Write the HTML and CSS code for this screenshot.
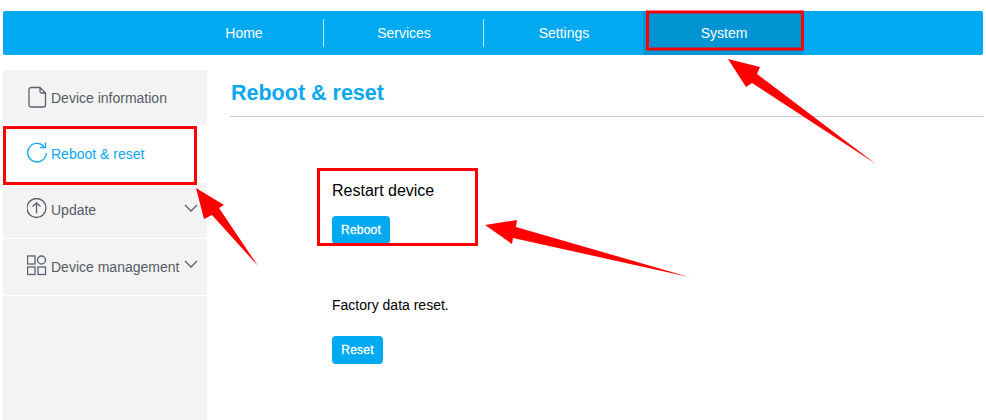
FILE: index.html
```html
<!DOCTYPE html>
<html lang="en">
<head>
<meta charset="utf-8">
<title>Reboot &amp; reset</title>
<link rel="stylesheet" href="styles.css">
</head>
<body>
<nav class="topnav">
  <a class="tab sep">Home</a>
  <a class="tab sep">Services</a>
  <a class="tab">Settings</a>
  <a class="tab active">System</a>
</nav>
<div class="layout">
  <aside class="sidebar">
    <div class="item">
      <svg class="icon" viewBox="0 0 20 22"><path d="M4 1.500h9l5.500 5.500v12a2 2 0 0 1-2 2H4a2 2 0 0 1-2-2v-15.500a2 2 0 0 1 2-2z M13 1.500v4a1.500 1.500 0 0 0 1.500 1.500h4"/></svg>
      <span>Device information</span>
    </div>
    <div class="item current">
      <svg class="icon" viewBox="0 0 20 22"><path d="M17 4.500A9.300 9.300 0 1 0 19.300 11 M18.500 0.500v5h-5.500"/></svg>
      <span>Reboot &amp; reset</span>
    </div>
    <div class="item raised">
      <svg class="icon" viewBox="0 0 20 22"><circle cx="9.500" cy="10" r="9.500"/><path d="M9.500 15.500V5 M5.500 8.500L9.500 4.800l4 3.700"/></svg>
      <span>Update</span>
      <svg class="chev" viewBox="0 0 14 8"><path d="M1 1l6 6 6-6"/></svg>
    </div>
    <div class="item">
      <svg class="icon" viewBox="0 0 20 22"><rect x="0.500" y="1" width="7.500" height="8"/><circle cx="14.500" cy="5" r="4"/><rect x="0.500" y="12" width="7.500" height="7.500"/><rect x="11" y="12" width="7.500" height="7.500"/></svg>
      <span>Device management</span>
      <svg class="chev" viewBox="0 0 14 8"><path d="M1 1l6 6 6-6"/></svg>
    </div>
  </aside>
  <main class="content">
    <h1 class="title">Reboot &amp; reset</h1>
    <section class="panel">
      <h2 class="restart">Restart device</h2>
      <button class="btn">Reboot</button>
      <p class="factory">Factory data reset.</p>
      <button class="btn">Reset</button>
    </section>
  </main>
</div>
<svg class="annotations" viewBox="0 0 986 420">
  <g class="boxes">
    <rect x="647.500" y="12" width="155" height="37"/>
    <rect x="4.500" y="127.500" width="191" height="56"/>
    <rect x="318.500" y="169.500" width="158" height="75"/>
  </g>
  <polygon points="728,59 760,67 757,74 876,164 752,83 746,87"/>
  <polygon points="196,188 224,205 219,208 258,266 212,215 204,219"/>
  <polygon points="485,225 517,220 516,227 689,277 513,238 512,244"/>
</svg>
</body>
</html>
```
FILE: styles.css
```css
* { box-sizing: border-box; }
html, body { height: 420px; overflow: hidden; }
body {
  margin: 0;
  padding: 11px 3px 0;
  background: #fff;
  font-family: "Liberation Sans", Arial, sans-serif;
  color: #000;
  position: relative;
}
.topnav {
  display: flex;
  height: 44px;
  padding-left: 160px;
  background: #00a9f0;
  border-radius: 2px;
}
.tab {
  width: 160px;
  padding-left: 2px;
  display: flex;
  align-items: center;
  justify-content: center;
  color: #fff;
  font-size: 14px;
  position: relative;
}
.tab.sep::after {
  content: "";
  position: absolute;
  right: -1px;
  top: 8px;
  width: 1px;
  height: 28px;
  background: #bfe8fb;
}
.tab.active { background: #0095d2; }
.layout {
  display: flex;
  margin-top: 15px;
  height: 350px;
}
.sidebar {
  width: 204px;
  flex: none;
  background: #f3f3f3;
}
.item {
  height: 56px;
  display: flex;
  align-items: center;
  padding-left: 24px;
  gap: 4px;
  border-bottom: 1px solid #fff;
  color: #555b66;
  font-size: 14px;
  position: relative;
}
.item:nth-child(even) { height: 57px; }
.item.raised { padding-bottom: 2px; }
.item.current { background: #fff; color: #0aa8f0; }
.icon {
  width: 20px;
  height: 22px;
  margin-top: -2px;
  flex: none;
  fill: none;
  stroke: #5a6070;
  stroke-width: 1.3;
}
.current .icon { stroke: #0aa8f0; }
.chev {
  position: absolute;
  right: 9px;
  top: 21px;
  width: 14px;
  height: 8px;
  fill: none;
  stroke: #5a6070;
  stroke-width: 1.300;
}
.content {
  flex: 1;
  margin-left: 23px;
}
.title {
  margin: 0;
  height: 47px;
  padding: 10px 0 0 1px;
  border-bottom: 1px solid #c9c9c9;
  color: #0aa8f0;
  font-size: 21.5px;
  line-height: 26px;
  font-weight: bold;
}
.panel { padding: 65px 0 0 102px; }
.restart {
  margin: 0;
  font-size: 16px;
  font-weight: normal;
  line-height: 18px;
}
.btn {
  display: block;
  height: 28px;
  width: 58px;
  margin: 16px 0 0;
  padding: 0;
  border: 0;
  border-radius: 4px;
  background: #00a9f0;
  color: #fff;
  font: normal 12px "Liberation Sans", Arial, sans-serif;
  letter-spacing: 0.2px;
  -webkit-text-stroke: 0.3px #fff;
}
.factory {
  margin: 53px 0 0;
  font-size: 14px;
  line-height: 16px;
}
.factory + .btn { margin-top: 23px; width: 51px; }
.annotations {
  position: absolute;
  left: 0;
  top: 0;
  width: 986px;
  height: 420px;
  pointer-events: none;
}
.annotations polygon { fill: #ff0000; }
.boxes rect { fill: none; stroke: #ff0000; stroke-width: 3; }
```
